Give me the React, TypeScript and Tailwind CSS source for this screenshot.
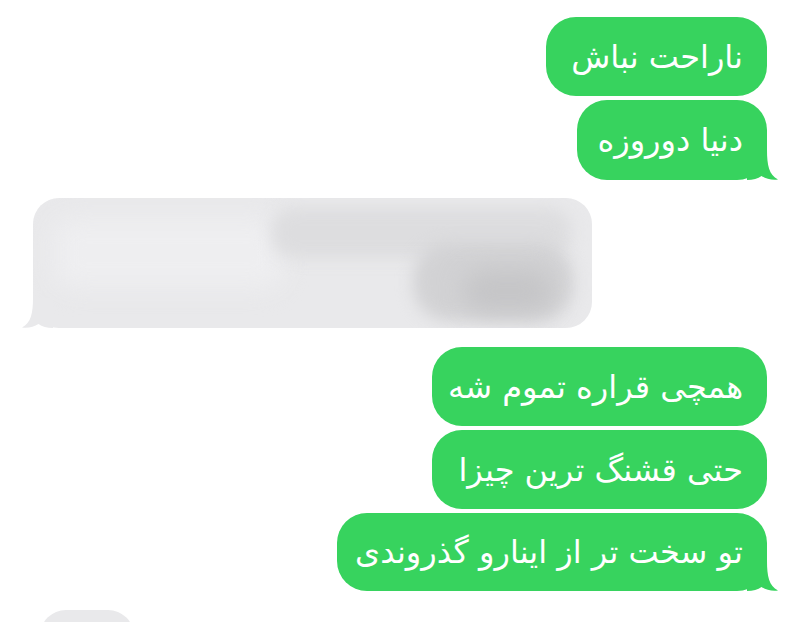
const persian = { fontFamily: '"DejaVu Sans", "Noto Sans", sans-serif' };

const TailRight = ({ color }: { color: string }) => (
  <svg
    className="absolute -right-[11px] bottom-0"
    width="31"
    height="30"
    viewBox="0 0 31 30"
  >
    <path
      d="M0 0 H20 C20 15 22 25 31 29.5 C25 30.3 19 29 14.5 26 C11 28.5 6 30 0 30 Z"
      fill={color}
    />
  </svg>
);

const TailLeft = ({ color }: { color: string }) => (
  <svg
    className="absolute -left-[11px] bottom-0"
    width="31"
    height="30"
    viewBox="0 0 31 30"
  >
    <path
      d="M31 0 H11 C11 15 9 25 0 29.5 C6 30.3 12 29 16.5 26 C20 28.5 25 30 31 30 Z"
      fill={color}
    />
  </svg>
);

const Sent = ({
  text,
  width,
  height,
  tail,
}: {
  text: string;
  width: string;
  height: string;
  tail?: boolean;
}) => (
  <div
    className={`relative flex items-center justify-end rounded-[30px] bg-[#37d35e] pr-[24px] ${width} ${height}`}
  >
    <span
      dir="rtl"
      className="relative z-10 text-[32px] leading-none text-white whitespace-nowrap"
      style={persian}
    >
      {text}
    </span>
    {tail && <TailRight color="#37d35e" />}
  </div>
);

export default function App() {
  return (
    <div className="w-full h-[622px] overflow-hidden bg-white flex flex-col pt-[17px] px-[33px]">
      <div className="flex flex-col items-end gap-[4px]">
        <Sent text="ناراحت نباش" width="w-[221px]" height="h-[79px]" />
        <Sent text="دنیا دوروزه" width="w-[190px]" height="h-[80px]" tail />
      </div>

      <div className="mt-[18px] flex">
        <div className="relative w-[559px] h-[130px] rounded-[26px] bg-[#e9e9eb]">
          <div className="absolute inset-0 overflow-hidden rounded-[26px]">
            <div className="absolute left-[20px] top-[20px] w-[230px] h-[70px] rounded-[20px] bg-[#eeeef0] blur-md" />
            <div className="absolute left-[238px] top-[10px] w-[300px] h-[50px] rounded-[22px] bg-[#dddddf] blur-sm" />
            <div className="absolute left-[380px] top-[45px] w-[160px] h-[78px] rounded-[36px] bg-[#d2d2d4] blur-sm" />
            <div className="absolute left-[430px] top-[72px] w-[90px] h-[42px] rounded-full bg-[#c5c5c7] blur-md" />
          </div>
          <TailLeft color="#e9e9eb" />
        </div>
      </div>

      <div className="mt-[19px] flex flex-col items-end gap-[4px]">
        <Sent text="همچی قراره تموم شه" width="w-[335px]" height="h-[79px]" />
        <Sent text="حتی قشنگ ترین چیزا" width="w-[335px]" height="h-[79px]" />
        <Sent text="تو سخت تر از اینارو گذروندی" width="w-[430px]" height="h-[78px]" tail />
      </div>

      <div className="mt-[19px] flex pl-[7px]">
        <div className="w-[94px] h-[60px] rounded-[26px] bg-[#e9e9eb]" />
      </div>
    </div>
  );
}
